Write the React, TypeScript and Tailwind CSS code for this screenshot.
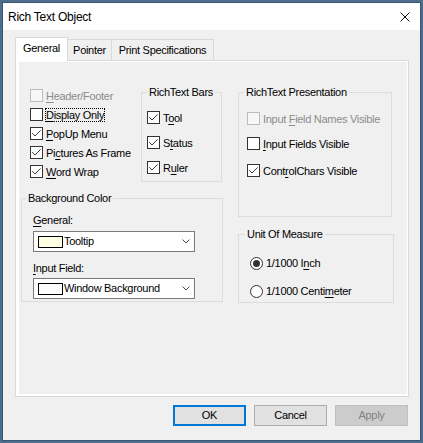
import React from 'react';
import clsx from 'clsx';

const Mn = ({ children }: { children: React.ReactNode }) => (
  <u className="underline decoration-1 underline-offset-[2px]">{children}</u>
);

const CheckBox = ({ checked, disabled }: { checked?: boolean; disabled?: boolean }) => (
  <span
    className={clsx(
      'w-[13px] h-[13px] shrink-0 border flex items-center justify-center',
      disabled ? 'border-[#bcbcbc] bg-[#f7f7f7]' : 'border-[#333333] bg-white'
    )}
  >
    {checked && (
      <svg width="11" height="11" viewBox="0 0 11 11">
        <path d="M1.2 5.2 L4 8 L9.6 2.4" fill="none" stroke="#3a3a3a" strokeWidth="1" />
      </svg>
    )}
  </span>
);

const Check = ({
  label,
  checked,
  disabled,
  focused,
  className,
}: {
  label: React.ReactNode;
  checked?: boolean;
  disabled?: boolean;
  focused?: boolean;
  className?: string;
}) => (
  <div className={clsx('flex items-center gap-[2px]', className)}>
    <CheckBox checked={checked} disabled={disabled} />
    <span
      className={clsx(
        'border px-0 leading-[12px] whitespace-nowrap',
        focused ? 'border-dotted border-black' : 'border-transparent',
        disabled ? 'text-[#8c8c8c]' : 'text-black'
      )}
    >
      {label}
    </span>
  </div>
);

const Radio = ({ label, selected }: { label: React.ReactNode; selected?: boolean }) => (
  <div className="flex items-center gap-[3px] h-[20px] ml-[11px]">
    <span className="w-[13px] h-[13px] rounded-full border border-[#333333] bg-white flex items-center justify-center">
      {selected && <span className="w-[7px] h-[7px] rounded-full bg-[#333333]" />}
    </span>
    <span className="whitespace-nowrap">{label}</span>
  </div>
);

const Group = ({
  title,
  className,
  legendClass,
  children,
}: {
  title: string;
  className?: string;
  legendClass?: string;
  children: React.ReactNode;
}) => (
  <fieldset className={clsx('border border-[#dcdcdc] min-w-0', className)}>
    <legend className={clsx('px-[2px] leading-[14px] whitespace-nowrap', legendClass ?? 'ml-[5px]')}>{title}</legend>
    {children}
  </fieldset>
);

const Combo = ({ swatch, text }: { swatch: string; text: string }) => (
  <div className="ml-[11px] w-[162px] h-[21px] border border-[#7a7a7a] bg-white flex items-center pl-[4px] pr-[4px]">
    <span className={clsx('w-[25px] h-[12px] border border-black shrink-0', swatch)} />
    <span className="ml-[1px] whitespace-nowrap">{text}</span>
    <svg className="ml-auto" width="8" height="5" viewBox="0 0 8 5">
      <path d="M0.5 0.5 L4 4 L7.5 0.5" fill="none" stroke="#505050" strokeWidth="1" />
    </svg>
  </div>
);

export default function App() {
  return (
    <div className="w-[423px] h-[443px] bg-[#4d6d8f] p-[2px] font-['Liberation_Sans',Arial,sans-serif] text-[11px] tracking-[-0.3px] text-black">
      <div className="w-full h-full border border-[#3b5574] bg-[#f0f0f0] flex flex-col">
        {/* title bar */}
        <div className="h-[27px] bg-white flex items-center pl-[5px] pr-[10px] shrink-0">
          <span className="text-[12px] tracking-[-0.25px]">Rich Text Object</span>
          <svg className="ml-auto" width="10" height="10" viewBox="0 0 10 10">
            <path d="M0.5 0.5 L9.5 9.5 M9.5 0.5 L0.5 9.5" stroke="#111" strokeWidth="1" />
          </svg>
        </div>

        <div className="flex-1 pl-[12px] pr-[11px] pt-[7px]">
          {/* tabs */}
          <div className="flex items-start h-[23px] relative">
            <div className="relative z-10 w-[53px] h-[24px] border border-b-0 border-[#d9d9d9] bg-white text-center pt-[3px] leading-[14px]">
              General
            </div>
            <div className="-ml-px mt-[2px] w-[45px] h-[21px] border border-b-0 border-[#d9d9d9] bg-[#f0f0f0] text-center pt-[3px] leading-[14px]">
              Pointer
            </div>
            <div className="-ml-px mt-[2px] w-[103px] h-[21px] border border-b-0 border-[#d9d9d9] bg-[#f0f0f0] text-center pt-[3px] leading-[14px]">
              Print Specifications
            </div>
          </div>

          {/* panel */}
          <div className="border border-[#d9d9d9] bg-white w-[394px] h-[337px] pl-[3px] pr-[1px] pt-[1px] pb-[2px]">
            <div className="h-full bg-[#f0f0f0] flex items-start pt-[23px] pl-[2px]">
              {/* left column */}
              <div className="w-[202px] flex flex-col">
                <div className="flex items-start">
                  <div className="ml-[9px] w-[111px] pt-[1px] flex flex-col">
                    <Check className="h-[19px]" disabled label={<><Mn>H</Mn>eader/Footer</>} />
                    <Check className="h-[19px]" focused label={<><Mn>D</Mn>isplay Only</>} />
                    <Check className="h-[19px]" checked label={<><Mn>P</Mn>opUp Menu</>} />
                    <Check className="h-[19px]" checked label={<>Pi<Mn>c</Mn>tures As Frame</>} />
                    <Check className="h-[19px]" checked label={<><Mn>W</Mn>ord Wrap</>} />
                  </div>
                  <Group title="RichText Bars" className="w-[81px] pt-[6px] pb-[1px]">
                    <Check className="h-[25px] ml-[5px]" checked label={<>T<Mn>o</Mn>ol</>} />
                    <Check className="h-[25px] ml-[5px]" checked label={<>S<Mn>t</Mn>atus</>} />
                    <Check className="h-[25px] ml-[5px]" checked label={<>R<Mn>u</Mn>ler</>} />
                  </Group>
                </div>

                <Group title="Background Color" legendClass="ml-[4px]" className="mt-[9px] w-[202px] pb-[2px]">
                  <div className="ml-[11px] mt-[8px] leading-[14px]">
                    <Mn>G</Mn>eneral:
                  </div>
                  <div className="mt-[4px]">
                    <Combo swatch="bg-[#ffffe1]" text="Tooltip" />
                  </div>
                  <div className="ml-[11px] mt-[9px] leading-[14px]">
                    <Mn>I</Mn>nput Field:
                  </div>
                  <div className="mt-[3px]">
                    <Combo swatch="bg-white" text="Window Background" />
                  </div>
                </Group>
              </div>

              {/* right column */}
              <div className="ml-[15px] flex flex-col">
                <Group title="RichText Presentation" className="w-[154px] pt-[7px] pb-[33px]">
                  <Check className="h-[25px] ml-[8px]" disabled label={<>Input <Mn>F</Mn>ield Names Visible</>} />
                  <Check className="h-[25px] ml-[8px]" label={<><Mn>I</Mn>nput Fields Visible</>} />
                  <Check className="h-[25px] ml-[8px] mt-[2px]" checked label={<>Cont<Mn>r</Mn>olChars Visible</>} />
                </Group>

                <Group title="Unit Of Measure" legendClass="ml-[6px]" className="mt-[10px] w-[156px] pt-[12px] pb-[1px]">
                  <Radio selected label={<>1/1000 I<Mn>n</Mn>ch</>} />
                  <div className="mt-[8px]">
                    <Radio label={<>1/1000 Centi<Mn>m</Mn>eter</>} />
                  </div>
                </Group>
              </div>
            </div>
          </div>

          {/* buttons */}
          <div className="flex justify-end gap-[8px] mt-[8px] mr-px">
            <button className="w-[73px] h-[21px] border-2 border-[#0078d7] bg-[#e1e1e1] flex items-center justify-center">
              OK
            </button>
            <button className="w-[73px] h-[21px] border border-[#adadad] bg-[#e1e1e1] flex items-center justify-center">
              Cancel
            </button>
            <button className="w-[73px] h-[21px] border border-[#bfbfbf] bg-[#cccccc] text-[#838383] flex items-center justify-center">
              Apply
            </button>
          </div>
        </div>
      </div>
    </div>
  );
}
